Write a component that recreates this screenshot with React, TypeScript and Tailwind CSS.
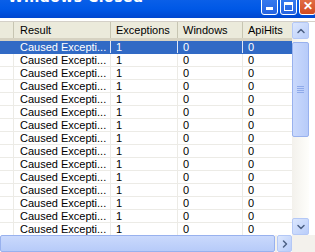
import { ChevronUp, ChevronDown, ChevronRight } from "lucide-react";

const rows = Array.from({ length: 16 }, (_, i) => i);

export default function App() {
  return (
    <div className="w-[315px] h-[252px] bg-white overflow-hidden relative font-['Liberation_Sans',sans-serif] text-[11px] text-black">
      {/* Title bar, top cut off */}
      <div className="h-[18px] bg-gradient-to-b from-[#0a5fe8] via-[#0058e6] to-[#0046cf] relative">
        <div className="absolute left-[8px] top-[-10px] font-['DejaVu_Sans',sans-serif] font-bold text-[14px] text-white leading-none tracking-[0.5px]">
          Windows Closed
        </div>
        <div className="absolute top-[-6px] left-[261px] flex gap-[2px]">
          <div className="w-[17px] h-[21px] rounded-[3px] border border-white bg-gradient-to-b from-[#3c81f3] to-[#2663e0] flex items-end justify-center pb-[4px]">
            <div className="w-[7px] h-[3px] bg-white" />
          </div>
          <div className="w-[17px] h-[21px] rounded-[3px] border border-white bg-gradient-to-b from-[#3c81f3] to-[#2663e0] flex items-end justify-center pb-[3px]">
            <div className="w-[9px] h-[9px] border border-white border-t-[3px]" />
          </div>
          <div className="w-[17px] h-[21px] rounded-[3px] border border-white bg-gradient-to-b from-[#e5784f] to-[#d24a1f] flex items-end justify-center pb-[2px] text-white font-bold text-[12px] leading-none">
            ✕
          </div>
        </div>
      </div>
      <div className="h-[4px] bg-white border-b border-[#d4d0c8]" />

      <div className="flex">
        {/* List view */}
        <div className="w-[292px] h-[213px] overflow-hidden">
          <div className="flex h-[19px] bg-[#ebeadb] border-b-[3px] border-[#d6d2c2]">
            <div className="w-[14px] border-r border-[#c7c5b2]" />
            <div className="w-[97px] pl-[6px] flex items-center border-r border-[#c7c5b2]">Result</div>
            <div className="w-[67px] pl-[5px] flex items-center border-r border-[#c7c5b2]">Exceptions</div>
            <div className="w-[65px] pl-[5px] flex items-center border-r border-[#c7c5b2]">Windows</div>
            <div className="w-[49px] pl-[5px] flex items-center">ApiHits</div>
          </div>
          {rows.map((i) => {
            const sel = i === 0;
            return (
              <div
                key={i}
                className={`flex h-[13px] leading-[12px] border-b ${
                  sel ? "bg-[#316ac5] text-white border-[#316ac5]" : "border-[#ecebe6]"
                }`}
              >
                <div className={`w-[14px] border-r ${sel ? "border-[#316ac5]" : "border-[#ecebe6]"}`} />
                <div className={`w-[97px] pl-[6px] border-r ${sel ? "border-[#e0e8f6]" : "border-[#ecebe6]"}`}>
                  Caused Excepti...
                </div>
                <div className={`w-[67px] pl-[5px] border-r ${sel ? "border-[#e0e8f6]" : "border-[#ecebe6]"}`}>1</div>
                <div className={`w-[65px] pl-[5px] border-r ${sel ? "border-[#e0e8f6]" : "border-[#ecebe6]"}`}>0</div>
                <div className="w-[49px] pl-[5px]">0</div>
              </div>
            );
          })}
        </div>

        {/* Vertical scrollbar */}
        <div className="w-[17px] h-[213px] bg-gradient-to-r from-[#f3f1ec] to-[#fefefb] flex flex-col">
          <div className="h-[17px] rounded-[2px] border border-[#b4c8f6] bg-gradient-to-br from-[#dce7fd] to-[#b9cdfa] flex items-center justify-center text-[#4d6185]">
            <ChevronUp size={12} strokeWidth={3} />
          </div>
          <div className="mt-[3px] h-[95px] rounded-[2px] border border-[#98b1ee] bg-gradient-to-r from-[#cad9fc] to-[#b7cbf9] flex items-center justify-center">
            <div className="flex flex-col gap-[1px]">
              <div className="w-[7px] h-[1px] bg-[#8faaea]" />
              <div className="w-[7px] h-[1px] bg-[#8faaea]" />
              <div className="w-[7px] h-[1px] bg-[#8faaea]" />
              <div className="w-[7px] h-[1px] bg-[#8faaea]" />
            </div>
          </div>
          <div className="flex-1" />
          <div className="h-[17px] rounded-[2px] border border-[#b4c8f6] bg-gradient-to-br from-[#dce7fd] to-[#b9cdfa] flex items-center justify-center text-[#4d6185]">
            <ChevronDown size={12} strokeWidth={3} />
          </div>
        </div>
        <div className="flex-1 bg-white" />
      </div>

      {/* Horizontal scrollbar */}
      <div className="flex h-[17px]">
        <div className="w-[275px] rounded-[2px] border border-[#98b1ee] bg-gradient-to-b from-[#cad9fc] to-[#b7cbf9]" />
        <div className="w-[2px] bg-[#f3f1ec]" />
        <div className="w-[15px] rounded-[2px] border border-[#b4c8f6] bg-gradient-to-br from-[#dce7fd] to-[#b9cdfa] flex items-center justify-center text-[#4d6185]">
          <ChevronRight size={12} strokeWidth={3} />
        </div>
        <div className="flex-1 bg-[#f3f1ec]" />
      </div>
    </div>
  );
}
